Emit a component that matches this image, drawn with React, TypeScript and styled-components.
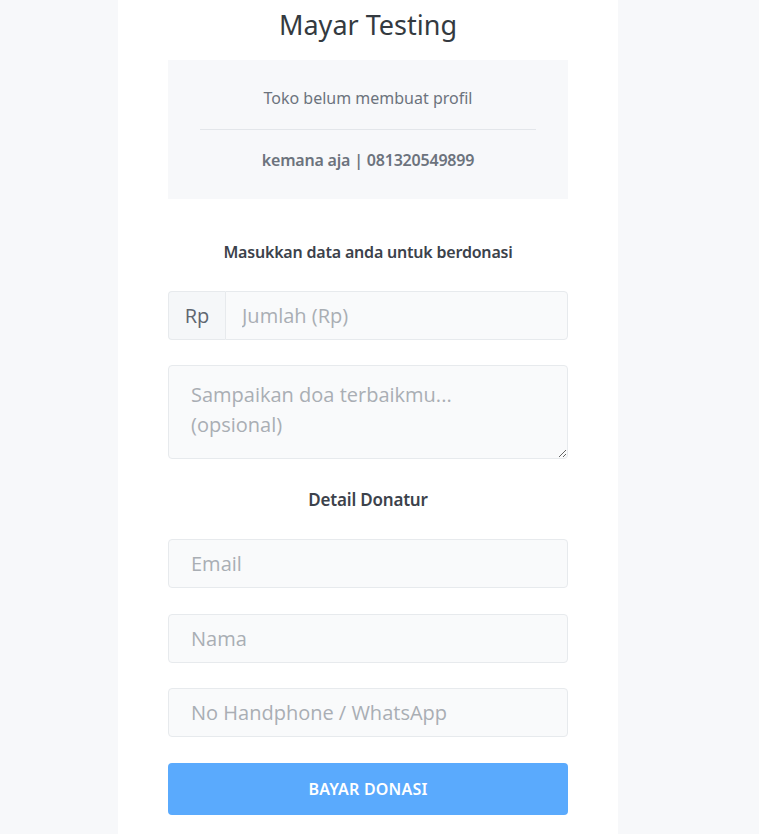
import React from "react";
import styled, { createGlobalStyle } from "styled-components";

const GlobalStyle = createGlobalStyle`
  body {
    margin: 0;
    background: #f7f8fa;
    font-family: "Noto Sans", "Open Sans", sans-serif;
  }
`;

const Page = styled.div`
  width: 736px;
  display: flex;
  justify-content: center;
`;

const Panel = styled.div`
  width: 500px;
  box-sizing: border-box;
  background: #ffffff;
  padding: 10px 50px 30px;
  min-height: 100vh;
`;

const Title = styled.h1`
  margin: 0 0 20px;
  text-align: center;
  font-size: 27px;
  line-height: 30px;
  font-weight: 400;
  color: #343a40;
`;

const InfoBox = styled.div`
  background: #f7f8fa;
  padding: 26px 32px 27px;
  text-align: center;
`;

const InfoText = styled.p<{ $strong?: boolean }>`
  margin: 0;
  font-size: 16px;
  line-height: 24px;
  color: #6c737d;
  font-weight: ${(p) => (p.$strong ? 600 : 400)};
  letter-spacing: ${(p) => (p.$strong ? "-0.2px" : "0")};
`;

const Divider = styled.hr`
  border: none;
  border-top: 1px solid #e3e6ea;
  margin: 19px 0 18px;
`;

const SectionTitle = styled.h3<{ $top: number; $bottom: number; $size: number }>`
  margin: ${(p) => p.$top}px 0 ${(p) => p.$bottom}px;
  text-align: center;
  font-size: ${(p) => p.$size}px;
  line-height: 24px;
  font-weight: 600;
  letter-spacing: -0.2px;
  color: #3c424b;
`;

const InputGroup = styled.div`
  display: flex;
  height: 49px;
  margin-bottom: 25px;
`;

const Addon = styled.span`
  width: 57px;
  box-sizing: border-box;
  display: flex;
  align-items: center;
  justify-content: center;
  background: #f5f7f9;
  border: 1px solid #e7eaed;
  border-right: none;
  border-radius: 4px 0 0 4px;
  font-family: "Open Sans", sans-serif;
  font-size: 20px;
  color: #5f6670;
`;

const fieldBase = `
  box-sizing: border-box;
  width: 100%;
  background: #f9fafb;
  border: 1px solid #e7eaed;
  border-radius: 4px;
  font-family: "Open Sans", sans-serif;
  font-size: 20px;
  color: #495057;
  outline: none;
  &::placeholder {
    color: #a9aeb4;
  }
`;

const Field = styled.input<{ $joined?: boolean }>`
  ${fieldBase}
  display: block;
  height: 49px;
  padding: 0 22px;
  margin-bottom: 25.5px;
  border-radius: ${(p) => (p.$joined ? "0 4px 4px 0" : "4px")};
  ${(p) => (p.$joined ? "margin-bottom: 0; flex: 1; padding-left: 16px;" : "")}
`;

const TextArea = styled.textarea`
  ${fieldBase}
  display: block;
  height: 94px;
  padding: 14px 22px;
  line-height: 30px;
  resize: vertical;
`;

const PayButton = styled.button`
  display: block;
  width: 100%;
  height: 52px;
  border: none;
  border-radius: 4px;
  background: #5aaafd;
  color: #ffffff;
  font-family: "Noto Sans", sans-serif;
  font-size: 16px;
  font-weight: 600;
  letter-spacing: 0.2px;
  cursor: pointer;
`;

const App: React.FC = () => {
  return (
    <>
      <GlobalStyle />
      <Page>
        <Panel>
          <Title>Mayar Testing</Title>
          <InfoBox>
            <InfoText>Toko belum membuat profil</InfoText>
            <Divider />
            <InfoText $strong>kemana aja | 081320549899</InfoText>
          </InfoBox>
          <SectionTitle $top={41} $bottom={27} $size={16}>
            Masukkan data anda untuk berdonasi
          </SectionTitle>
          <InputGroup>
            <Addon>Rp</Addon>
            <Field $joined placeholder="Jumlah (Rp)" />
          </InputGroup>
          <TextArea placeholder="Sampaikan doa terbaikmu... (opsional)" />
          <SectionTitle $top={29} $bottom={27} $size={17}>
            Detail Donatur
          </SectionTitle>
          <Field placeholder="Email" />
          <Field placeholder="Nama" />
          <Field placeholder="No Handphone / WhatsApp" />
          <PayButton>BAYAR DONASI</PayButton>
        </Panel>
      </Page>
    </>
  );
};

export default App;
